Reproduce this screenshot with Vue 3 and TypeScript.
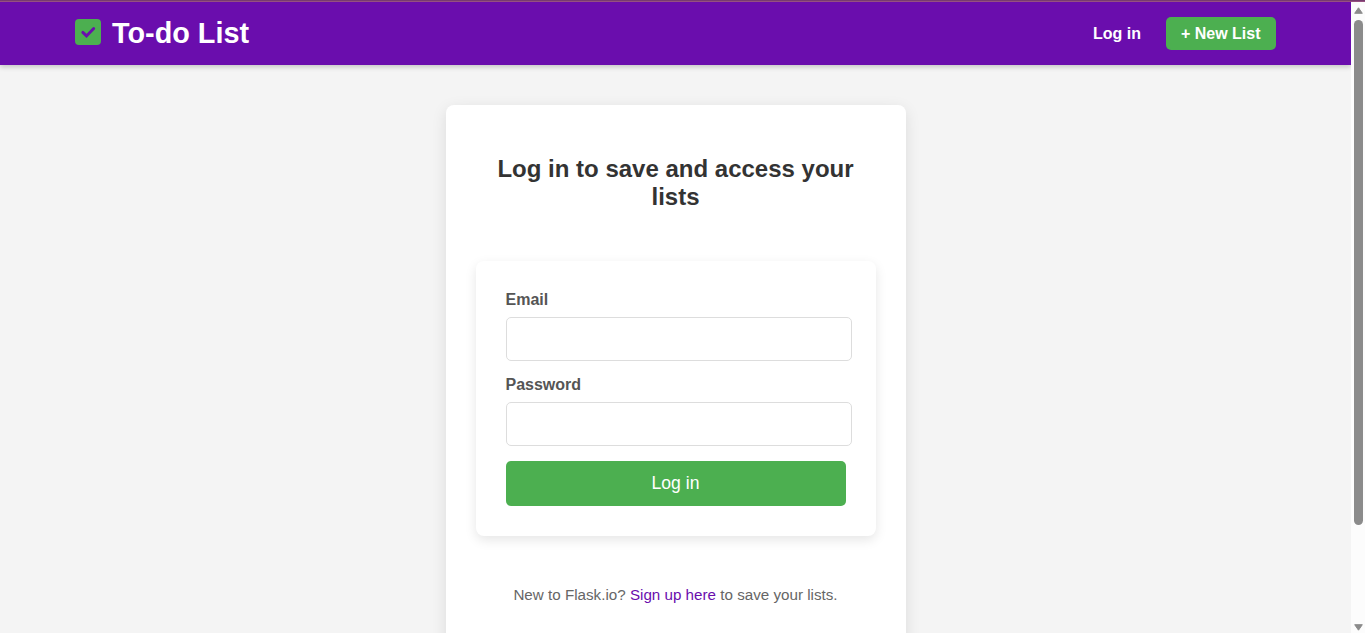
<script setup lang="ts">
import { ref } from 'vue'

const email = ref<string>('')
const password = ref<string>('')
</script>

<template>
  <div class="window">
    <div class="edge"></div>
    <div class="viewport">
      <div class="page">
        <header class="header">
          <div class="bar">
            <a class="brand">
              <svg class="logo" viewBox="0 0 26 26" aria-hidden="true">
                <rect width="26" height="26" rx="4" fill="#4caf50" />
                <path d="M7.8 13.4 L11.5 16.9 L18.7 9.5" fill="none" stroke="#6a0dad" stroke-width="2.9" stroke-linecap="round" />
              </svg>
              <span>To-do List</span>
            </a>
            <nav class="nav">
              <a class="login">Log in</a>
              <a class="new-list">+ New List</a>
            </nav>
          </div>
        </header>
        <main class="card">
          <h1>Log in to save and access your lists</h1>
          <form class="form" @submit.prevent>
            <label for="email">Email</label>
            <input id="email" v-model="email" type="email" />
            <label for="password">Password</label>
            <input id="password" v-model="password" type="password" />
            <button type="submit">Log in</button>
          </form>
          <p class="signup">New to Flask.io? <a>Sign up here</a> to save your lists.</p>
        </main>
      </div>
      <div class="scrollbar">
        <svg class="arrow" viewBox="0 0 9 7"><path d="M4.5 .8 L8.3 6.3 H.7 Z" fill="#8b8b8b" stroke="#8b8b8b" stroke-linejoin="round" /></svg>
        <div class="thumb"></div>
        <svg class="arrow down" viewBox="0 0 9 7"><path d="M4.5 6.2 L.7 .7 H8.3 Z" fill="#8b8b8b" stroke="#8b8b8b" stroke-linejoin="round" /></svg>
      </div>
    </div>
  </div>
</template>

<style>
body {
  margin: 0;
  overflow: hidden;
}
</style>

<style scoped>
.window {
  width: 1365px;
  height: 633px;
  overflow: hidden;
  display: flex;
  flex-direction: column;
  font-family: "Liberation Sans", Arial, sans-serif;
}
.edge {
  box-sizing: border-box;
  height: 2px;
  flex: none;
  background: #773b70;
  border-bottom: 1px solid #965080;
}
.viewport {
  display: flex;
  flex: 1;
  min-height: 0;
}
.page {
  width: 1351px;
  overflow: hidden;
  background: #f4f4f4;
}
.header {
  height: 63px;
  background: #6a0dad;
  box-shadow: 0 2px 5px rgba(0, 0, 0, 0.2);
}
.bar {
  width: 1200px;
  height: 100%;
  margin: 0 auto;
  display: flex;
  align-items: center;
  justify-content: space-between;
  color: #fff;
  font-weight: bold;
}
.brand {
  display: flex;
  align-items: center;
  gap: 11px;
  margin-left: -0.5px;
  font-size: 28.8px;
  line-height: 33px;
}
.logo {
  width: 26px;
  height: 26px;
  margin-top: -3px;
}
.nav {
  display: flex;
  align-items: center;
  gap: 25px;
  font-size: 16px;
  line-height: 18px;
}
.new-list {
  padding: 7.5px 15px;
  border-radius: 5px;
  background: #4caf50;
}
.card {
  box-sizing: border-box;
  width: 460px;
  height: 600px;
  margin: 40px auto 0;
  padding: 50px 30px 30px;
  border-radius: 8px;
  background: #fff;
  box-shadow: 0 4px 15px rgba(0, 0, 0, 0.1);
  text-align: center;
}
h1 {
  margin: 0 0 50px;
  padding: 0 15px;
  color: #333;
  font-size: 24px;
  line-height: 28px;
}
.form {
  box-sizing: border-box;
  width: 400px;
  padding: 30px;
  border-radius: 8px;
  background: #fff;
  box-shadow: 0 4px 12px rgba(0, 0, 0, 0.1);
  text-align: left;
}
label {
  display: block;
  margin-bottom: 8px;
  color: #555;
  font-size: 16px;
  line-height: 18px;
  font-weight: bold;
}
input {
  display: block;
  box-sizing: border-box;
  width: 346px;
  height: 44px;
  margin: 0 0 15px;
  padding: 12px;
  border: 1px solid #ddd;
  border-radius: 5px;
  background: #fff;
  font: 16px "Liberation Sans", Arial, sans-serif;
}
button {
  display: block;
  width: 340px;
  height: 45px;
  padding: 0;
  border: 0;
  border-radius: 5px;
  background: #4caf50;
  color: #fff;
  font: 17.6px "Liberation Sans", Arial, sans-serif;
}
.signup {
  margin: 50px 0 0;
  color: #666;
  font-size: 15.2px;
  line-height: 17px;
}
.signup a {
  color: #6a0dad;
}
.scrollbar {
  box-sizing: border-box;
  width: 14px;
  padding: 5px 2px 2px 3px;
  display: flex;
  flex-direction: column;
  align-items: center;
  background: #fcfcfc;
}
.arrow {
  width: 9px;
  height: 7px;
  flex: none;
}
.thumb {
  width: 9px;
  height: 505px;
  margin-top: 6px;
  flex: none;
  border-radius: 5px;
  background: #8b8b8b;
}
.down {
  margin-top: auto;
}
</style>
